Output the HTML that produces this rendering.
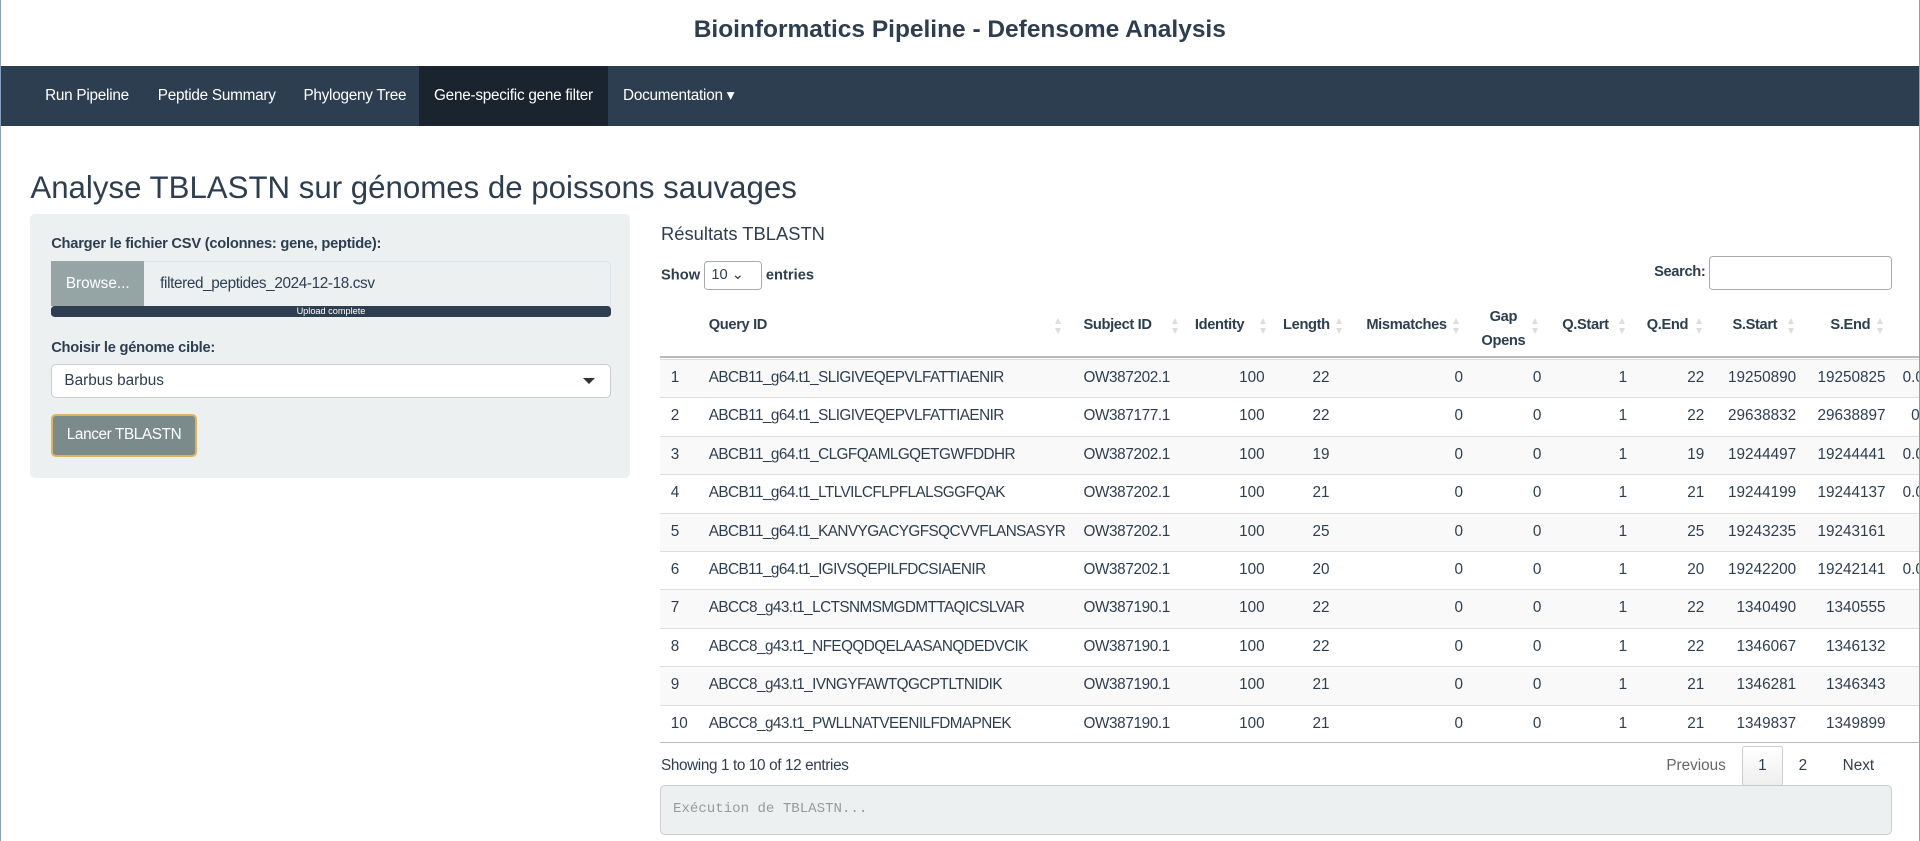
<!DOCTYPE html>
<html><head><meta charset="utf-8"><style>
*{box-sizing:border-box}
html,body{margin:0;padding:0;width:1920px;height:841px;overflow:hidden;background:#fff}
#z{zoom:1.2245;position:relative;width:1568px;height:687px;font-family:"Liberation Sans",sans-serif;color:#2c3e50;font-size:12.5px;border-left:1px solid #8aa0c0;border-right:1px solid #8aa0c0}
.abs{position:absolute;white-space:nowrap}
h1{position:absolute;left:0;width:1566px;top:13px;margin:0;text-align:center;font-size:20px;font-weight:bold}
.nav{position:absolute;left:0;top:54px;width:1566px;height:49px;background:#2c3e50}
.nav span{position:absolute;top:0;height:49px;line-height:49px;color:#fff;font-size:12.5px;white-space:nowrap;letter-spacing:-0.2px}
.well{position:absolute;left:24px;top:175px;width:490px;height:215px;background:#ecf0f1;border-radius:4px}
label{position:absolute;font-weight:bold;font-size:12px;white-space:nowrap;letter-spacing:-0.2px}
.row{position:absolute;left:538px;width:1028px;height:31.4px;border-top:1px solid #ddd;line-height:30px;overflow:hidden}
.row.o{background:#f9f9f9}
.row span{position:absolute;top:0}
.a{left:9px}.b{left:40px;letter-spacing:-0.45px}.c{left:346px;letter-spacing:-0.3px}.d{right:534px}.e{right:481px}.f{right:372px}.g{right:308px}.h{right:238px}.i{right:175px}.j{right:100px}.k{right:27px}.m{left:1015px}
.hd{position:absolute;font-weight:bold;font-size:12px;white-space:nowrap;letter-spacing:-0.3px}
.ar{position:absolute;width:6px;height:14px}
.ar:before{content:"";position:absolute;left:0;top:0;border:3px solid transparent;border-bottom:5px solid #ddd;border-top:none}
.ar:after{content:"";position:absolute;left:0;top:8px;border:3px solid transparent;border-top:5px solid #ddd;border-bottom:none}
</style></head><body><div id="z">
<h1>Bioinformatics Pipeline - Defensome Analysis</h1>
<div class="nav">
<span style="left:36px">Run Pipeline</span>
<span style="left:128px">Peptide Summary</span>
<span style="left:247px">Phylogeny Tree</span>
<span style="left:341px;width:155px;background:#1a242f;text-align:center">Gene-specific gene filter</span>
<span style="left:508px">Documentation ▾</span>
</div>
<div class="abs" style="left:24px;top:139px;font-size:25.5px">Analyse TBLASTN sur génomes de poissons sauvages</div>
<div class="well">
<label style="left:17px;top:18px">Charger le fichier CSV (colonnes: gene, peptide):</label>
<div class="abs" style="left:17px;top:38px;width:457px;height:38px;background:#ecf0f1;border:1px solid #dce4ec;border-radius:4px 4px 0 0"></div>
<div class="abs" style="left:17px;top:38px;width:76px;height:37px;background:#95a5a6;color:#fff;line-height:37px;text-align:center">Browse...</div>
<div class="abs" style="left:106px;top:38px;line-height:37px;letter-spacing:-0.3px">filtered_peptides_2024-12-18.csv</div>
<div class="abs" style="left:17px;top:75px;width:457px;height:9px;background:#2c3e50;border-radius:3px;color:#fff;font-size:7.5px;line-height:9px;text-align:center">Upload complete</div>
<label style="left:17px;top:103px">Choisir le génome cible:</label>
<div class="abs" style="left:17px;top:122px;width:457px;height:28px;background:#fff;border:1px solid #ccc;border-radius:4px;line-height:26px;padding-left:10px">Barbus barbus<span style="position:absolute;right:12px;top:11px;border:5px solid transparent;border-top:5px solid #333;border-bottom:none"></span></div>
<div class="abs" style="left:17px;top:163px;width:119px;height:35px;background:#7b8a8b;border:2px solid #e0b35a;border-radius:4px;color:#fff;line-height:31px;text-align:center;letter-spacing:-0.3px">Lancer TBLASTN</div>
</div>
<div class="abs" style="left:539px;top:182px;font-size:15px">Résultats TBLASTN</div>
<div class="abs" style="left:539px;top:213px;font-weight:bold;font-size:12px">Show <span style="display:inline-block;width:47px;height:24px;border:1px solid #aaa;border-radius:3px;font-weight:normal;vertical-align:middle;line-height:22px;padding-left:5px;background:#fff">10 ⌄</span> entries</div>
<div class="abs" style="left:1350px;top:216px;font-weight:bold;font-size:12px;letter-spacing:-0.3px">Search:</div>
<div class="abs" style="left:1395px;top:209px;width:149px;height:28px;border:1px solid #aaa;border-radius:3px;background:#fff"></div>

<div class="hd" style="left:578px;top:259px">Query ID</div><div class="ar" style="left:861px;top:260px"></div>
<div class="hd" style="left:884px;top:259px">Subject ID</div><div class="ar" style="left:956px;top:260px"></div>
<div class="hd" style="left:975px;top:259px">Identity</div><div class="ar" style="left:1028px;top:260px"></div>
<div class="hd" style="left:1047px;top:259px">Length</div><div class="ar" style="left:1090px;top:260px"></div>
<div class="hd" style="left:1115px;top:259px">Mismatches</div><div class="ar" style="left:1186px;top:260px"></div>
<div class="hd" style="left:1209px;top:249px;text-align:center;line-height:20px">Gap<br>Opens</div><div class="ar" style="left:1250px;top:260px"></div>
<div class="hd" style="left:1275px;top:259px">Q.Start</div><div class="ar" style="left:1321px;top:260px"></div>
<div class="hd" style="left:1344px;top:259px">Q.End</div><div class="ar" style="left:1384px;top:260px"></div>
<div class="hd" style="left:1414px;top:259px">S.Start</div><div class="ar" style="left:1459px;top:260px"></div>
<div class="hd" style="left:1494px;top:259px">S.End</div><div class="ar" style="left:1532px;top:260px"></div>
<div class="abs" style="left:538px;top:291px;width:1028px;border-top:2px solid #bbb"></div>

<div class="row o" style="top:293px"><span class="a">1</span><span class="b">ABCB11_g64.t1_SLIGIVEQEPVLFATTIAENIR</span><span class="c">OW387202.1</span><span class="d">100</span><span class="e">22</span><span class="f">0</span><span class="g">0</span><span class="h">1</span><span class="i">22</span><span class="j">19250890</span><span class="k">19250825</span><span class="m">0.0</span></div>
<div class="row" style="top:324.4px"><span class="a">2</span><span class="b">ABCB11_g64.t1_SLIGIVEQEPVLFATTIAENIR</span><span class="c">OW387177.1</span><span class="d">100</span><span class="e">22</span><span class="f">0</span><span class="g">0</span><span class="h">1</span><span class="i">22</span><span class="j">29638832</span><span class="k">29638897</span><span class="m">&nbsp;&nbsp;0</span></div>
<div class="row o" style="top:355.8px"><span class="a">3</span><span class="b">ABCB11_g64.t1_CLGFQAMLGQETGWFDDHR</span><span class="c">OW387202.1</span><span class="d">100</span><span class="e">19</span><span class="f">0</span><span class="g">0</span><span class="h">1</span><span class="i">19</span><span class="j">19244497</span><span class="k">19244441</span><span class="m">0.0</span></div>
<div class="row" style="top:387.2px"><span class="a">4</span><span class="b">ABCB11_g64.t1_LTLVILCFLPFLALSGGFQAK</span><span class="c">OW387202.1</span><span class="d">100</span><span class="e">21</span><span class="f">0</span><span class="g">0</span><span class="h">1</span><span class="i">21</span><span class="j">19244199</span><span class="k">19244137</span><span class="m">0.0</span></div>
<div class="row o" style="top:418.6px"><span class="a">5</span><span class="b">ABCB11_g64.t1_KANVYGACYGFSQCVVFLANSASYR</span><span class="c">OW387202.1</span><span class="d">100</span><span class="e">25</span><span class="f">0</span><span class="g">0</span><span class="h">1</span><span class="i">25</span><span class="j">19243235</span><span class="k">19243161</span></div>
<div class="row" style="top:450px"><span class="a">6</span><span class="b">ABCB11_g64.t1_IGIVSQEPILFDCSIAENIR</span><span class="c">OW387202.1</span><span class="d">100</span><span class="e">20</span><span class="f">0</span><span class="g">0</span><span class="h">1</span><span class="i">20</span><span class="j">19242200</span><span class="k">19242141</span><span class="m">0.0</span></div>
<div class="row o" style="top:481.4px"><span class="a">7</span><span class="b">ABCC8_g43.t1_LCTSNMSMGDMTTAQICSLVAR</span><span class="c">OW387190.1</span><span class="d">100</span><span class="e">22</span><span class="f">0</span><span class="g">0</span><span class="h">1</span><span class="i">22</span><span class="j">1340490</span><span class="k">1340555</span></div>
<div class="row" style="top:512.8px"><span class="a">8</span><span class="b">ABCC8_g43.t1_NFEQQDQELAASANQDEDVCIK</span><span class="c">OW387190.1</span><span class="d">100</span><span class="e">22</span><span class="f">0</span><span class="g">0</span><span class="h">1</span><span class="i">22</span><span class="j">1346067</span><span class="k">1346132</span></div>
<div class="row o" style="top:544.2px"><span class="a">9</span><span class="b">ABCC8_g43.t1_IVNGYFAWTQGCPTLTNIDIK</span><span class="c">OW387190.1</span><span class="d">100</span><span class="e">21</span><span class="f">0</span><span class="g">0</span><span class="h">1</span><span class="i">21</span><span class="j">1346281</span><span class="k">1346343</span></div>
<div class="row" style="top:575.6px"><span class="a">10</span><span class="b">ABCC8_g43.t1_PWLLNATVEENILFDMAPNEK</span><span class="c">OW387190.1</span><span class="d">100</span><span class="e">21</span><span class="f">0</span><span class="g">0</span><span class="h">1</span><span class="i">21</span><span class="j">1349837</span><span class="k">1349899</span></div>
<div class="abs" style="left:538px;top:606px;width:1028px;border-top:1px solid #bbb"></div>

<div class="abs" style="left:539px;top:618px;letter-spacing:-0.3px">Showing 1 to 10 of 12 entries</div>
<div class="abs" style="left:1360px;top:618px;color:#666">Previous</div>
<div class="abs" style="left:1422px;top:609px;width:33px;height:33px;border:1px solid #ccc;border-radius:2px;background:linear-gradient(#fff,#eee);text-align:center;line-height:31px">1</div>
<div class="abs" style="left:1468px;top:618px">2</div>
<div class="abs" style="left:1504px;top:618px">Next</div>
<div class="abs" style="left:538px;top:641px;width:1006px;height:41px;background:#ecf0f1;border:1px solid #ccc;border-radius:4px;font-family:'Liberation Mono',monospace;font-size:11.5px;color:#999;line-height:38px;padding-left:10px">Exécution de TBLASTN...</div>
</div></body></html>
